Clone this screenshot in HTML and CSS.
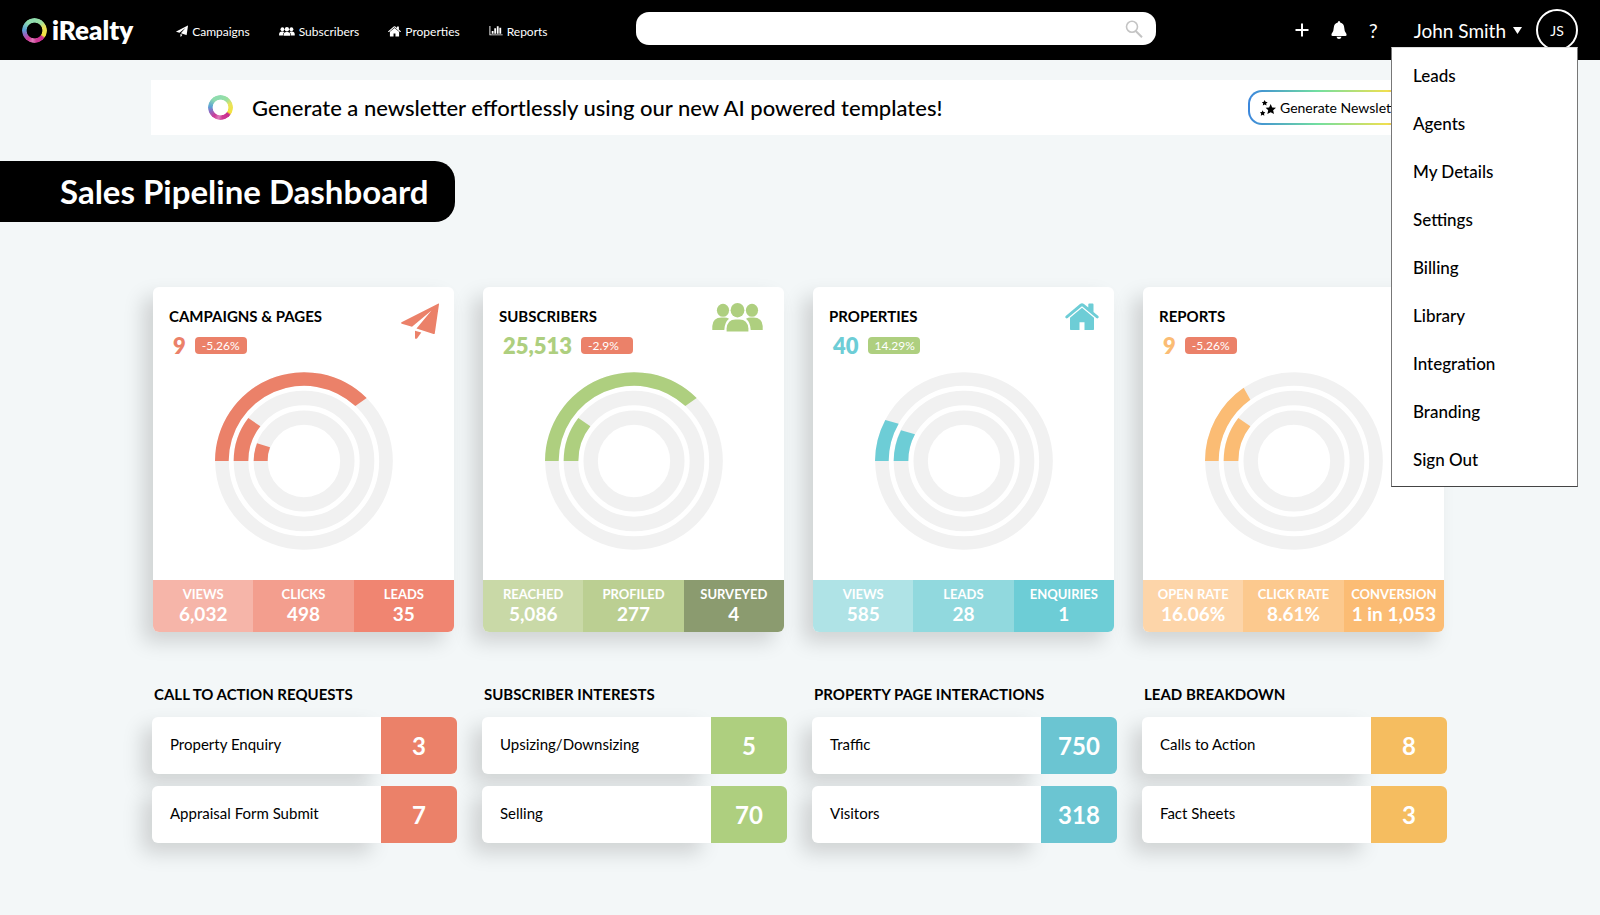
FILE: index.html
```html
<!DOCTYPE html>
<html lang="en">
<head>
    <meta charset="UTF-8">
    <meta name="viewport" content="width=device-width, initial-scale=1.0">
    <title>iRealty - Sales Pipeline Dashboard</title>
    <link rel="stylesheet" href="styles.css">
</head>
<body>
    <!-- Shared icons and chart rings -->
    <svg class="sprite" aria-hidden="true">
        <symbol id="icon-plane" viewBox="0 0 38 36">
            <path d="M37.500 0.600 L0.500 19.300 Q-0.300 20 0.800 20.700 L11 23.800 L30.500 7.500 L15.500 25.500 L32.500 31 Q33.600 31.300 33.800 30.200 L38 1.200 Q38.100 0.300 37.500 0.600Z"/>
            <path d="M14 27.700 L20.300 29.500 L16.200 35.200 Q14.200 36.800 14 34.800Z"/>
        </symbol>
        <symbol id="icon-people" viewBox="0 0 51 29" preserveAspectRatio="xMinYMid">
            <ellipse cx="11" cy="7.300" rx="6.100" ry="6.500"/>
            <ellipse cx="40" cy="7.300" rx="6.100" ry="6.500"/>
            <ellipse cx="25.500" cy="7.200" rx="6.900" ry="7.200"/>
            <path d="M0.300 27 V23 Q0.800 14.500 9.500 14.500 H12.500 Q15 14.500 17 15.800 Q12.500 19.500 12.300 27Z"/>
            <path d="M50.700 27 V23 Q50.200 14.500 41.500 14.500 H38.500 Q36 14.500 34 15.800 Q38.500 19.500 38.700 27Z"/>
            <path d="M14.600 28.500 V25.500 Q15.400 16.500 23.500 16.500 H27.500 Q35.600 16.500 36.400 25.500 V28.500Z"/>
        </symbol>
        <symbol id="icon-house" viewBox="0 0 34 28">
            <path d="M17 0.200 Q18 0.200 19 1 L23.300 4.600 V1.500 Q23.300 0.600 24.200 0.600 H27.600 Q28.500 0.600 28.500 1.500 V9 L33.300 13.100 Q34.100 14 33.300 15 Q32.300 15.800 31.300 15 L17 3.200 L2.700 15 Q1.700 15.800 0.700 15 Q-0.100 14 0.700 13.100 L15 1 Q16 0.200 17 0.200Z"/>
            <path d="M17 4.800 L29 14.700 V26.200 Q29 27 28.200 27 H19.500 V19.200 H14.500 V27 H5.800 Q5 27 5 26.200 V14.700Z"/>
        </symbol>
        <symbol id="icon-chart" viewBox="0 0 15 11">
            <path d="M0.300 0 H1.300 V9.300 H14.800 V10.300 H0.300Z"/>
            <path d="M2.800 5.500 h2 v3 h-2Z M5.600 2.500 h2 v6 h-2Z M8.400 0.300 h2 v8.200 h-2Z M11.200 1.800 h2 v6.700 h-2Z"/>
        </symbol>
        <symbol id="icon-stars" viewBox="0 0 24 24">
            <path d="M16 6 L18.300 11.200 L24 11.800 L19.700 15.500 L21 21 L16 18.200 L11 21 L12.300 15.500 L8.500 11.800 L13.700 11.200Z"/>
            <path d="M7 0 L8.300 2.800 L11.500 3.200 L9.200 5.300 L9.800 8.300 L7 6.800 L4.200 8.300 L4.800 5.300 L2.800 3.200 L5.700 2.800Z"/>
            <path d="M4 15.500 L5.200 18 L8 18.500 L6 20.500 L6.500 23.500 L4 22 L1.200 23.500 L1.800 20.500 L0 18.500 L2.800 18Z"/>
        </symbol>
        <symbol id="rings" viewBox="-267 -267 534 534">
            <circle r="246" fill="none" stroke="#f1f1f1" stroke-width="41"/>
            <circle r="189" fill="none" stroke="#f1f1f1" stroke-width="44"/>
            <circle r="130" fill="none" stroke="#f1f1f1" stroke-width="43"/>
        </symbol>
    </svg>

    <header class="header">
        <div class="header-left">
            <a href="#" class="logo"><span class="ring"></span>iRealty</a>
            <nav class="main-nav" aria-label="Main">
                <a href="#"><svg width="12" height="12"><use href="#icon-plane"/></svg>Campaigns</a>
                <a href="#"><svg width="16" height="9"><use href="#icon-people"/></svg>Subscribers</a>
                <a href="#"><svg width="13" height="11"><use href="#icon-house"/></svg>Properties</a>
                <a href="#"><svg width="14" height="10"><use href="#icon-chart"/></svg>Reports</a>
            </nav>
        </div>
        <form class="search" action="#" role="search">
            <input type="search" id="search" aria-label="Search">
            <button type="submit" aria-label="Submit search">
                <svg width="18" height="18" viewBox="0 0 18 18" fill="none" stroke="#c4c4c4" stroke-width="1.600"><circle cx="7" cy="6.800" r="5.500"/><path d="M10.700 11 L17 17.300" stroke-width="2"/></svg>
            </button>
        </form>
        <div class="header-right">
            <button type="button" class="icon-button" aria-label="Add">
                <svg width="14" height="14" viewBox="0 0 14 14" stroke="#fff" stroke-width="2"><path d="M7 0.500 V13.500 M0.500 7 H13.500"/></svg>
            </button>
            <button type="button" class="icon-button" aria-label="Notifications">
                <svg width="16" height="18" viewBox="0 0 16 18" fill="#fff"><path d="M8 0 Q9.200 0 9.200 1.500 Q13 2.500 13.200 6.500 Q13.300 11 15.500 13 Q16 14.800 14.500 15 H1.500 Q0 14.800 0.500 13 Q2.700 11 2.800 6.500 Q3 2.500 6.800 1.500 Q6.800 0 8 0Z M5.500 15.800 H10.500 Q10 18 8 18 Q6 18 5.500 15.800Z"/></svg>
            </button>
            <button type="button" class="icon-button help">?</button>
            <button type="button" class="user" aria-expanded="true">John Smith<svg width="9" height="7" viewBox="0 0 9 7" fill="#fff"><path d="M0 0 H9 L4.500 7Z"/></svg></button>
            <span class="avatar">JS</span>
        </div>
        <nav class="user-menu" aria-label="Account">
            <a href="#">Leads</a>
            <a href="#">Agents</a>
            <a href="#">My Details</a>
            <a href="#">Settings</a>
            <a href="#">Billing</a>
            <a href="#">Library</a>
            <a href="#">Integration</a>
            <a href="#">Branding</a>
            <a href="#">Sign Out</a>
        </nav>
    </header>

    <section class="banner">
        <span class="ring"></span>
        <p>Generate a newsletter effortlessly using our new AI powered templates!</p>
        <button type="button" class="generate"><svg width="16" height="16"><use href="#icon-stars"/></svg>Generate Newsletter</button>
    </section>

    <h1 class="page-title">Sales Pipeline Dashboard</h1>

    <main class="dashboard">
        <section class="cards">
            <article class="card red">
                <div class="card-head">
                    <h2>CAMPAIGNS &amp; PAGES</h2>
                    <svg class="card-icon" width="38" height="36"><use href="#icon-plane"/></svg>
                    <div class="total"><strong>9</strong><span class="badge down">-5.26%</span></div>
                </div>
                <svg class="chart" viewBox="-267 -267 534 534">
                    <use href="#rings" x="-267" y="-267" width="534" height="534"/>
                    <path d="M-267 0 A267 267 0 0 1 188 -189 L154 -165 A226 226 0 0 0 -226 0Z"/>
                    <path d="M-211 0 A211 211 0 0 1 -167 -129 L-131 -104 A167 167 0 0 0 -167 0Z"/>
                    <path d="M-151 0 A151 151 0 0 1 -141 -53 L-102 -41 A109 109 0 0 0 -109 0Z"/>
                </svg>
                <dl class="stats">
                    <div><dt>VIEWS</dt><dd>6,032</dd></div>
                    <div><dt>CLICKS</dt><dd>498</dd></div>
                    <div><dt>LEADS</dt><dd>35</dd></div>
                </dl>
            </article>

            <article class="card green">
                <div class="card-head">
                    <h2>SUBSCRIBERS</h2>
                    <svg class="card-icon" width="57" height="29"><use href="#icon-people"/></svg>
                    <div class="total"><strong>25,513</strong><span class="badge down">-2.9%</span></div>
                </div>
                <svg class="chart" viewBox="-267 -267 534 534">
                    <use href="#rings" x="-267" y="-267" width="534" height="534"/>
                    <path d="M-267 0 A267 267 0 0 1 188 -189 L154 -165 A226 226 0 0 0 -226 0Z"/>
                    <path d="M-211 0 A211 211 0 0 1 -167 -129 L-131 -104 A167 167 0 0 0 -167 0Z"/>
                </svg>
                <dl class="stats">
                    <div><dt>REACHED</dt><dd>5,086</dd></div>
                    <div><dt>PROFILED</dt><dd>277</dd></div>
                    <div><dt>SURVEYED</dt><dd>4</dd></div>
                </dl>
            </article>

            <article class="card blue">
                <div class="card-head">
                    <h2>PROPERTIES</h2>
                    <svg class="card-icon" width="34" height="28"><use href="#icon-house"/></svg>
                    <div class="total"><strong>40</strong><span class="badge up">14.29%</span></div>
                </div>
                <svg class="chart" viewBox="-267 -267 534 534">
                    <use href="#rings" x="-267" y="-267" width="534" height="534"/>
                    <path d="M-267 0 A267 267 0 0 1 -236 -123 L-196 -112 A226 226 0 0 0 -226 0Z"/>
                    <path d="M-211 0 A211 211 0 0 1 -189 -92 L-147 -80 A167 167 0 0 0 -167 0Z"/>
                </svg>
                <dl class="stats">
                    <div><dt>VIEWS</dt><dd>585</dd></div>
                    <div><dt>LEADS</dt><dd>28</dd></div>
                    <div><dt>ENQUIRIES</dt><dd>1</dd></div>
                </dl>
            </article>

            <article class="card orange">
                <div class="card-head">
                    <h2>REPORTS</h2>
                    <svg class="card-icon" width="38" height="28"><use href="#icon-chart"/></svg>
                    <div class="total"><strong>9</strong><span class="badge down">-5.26%</span></div>
                </div>
                <svg class="chart" viewBox="-267 -267 534 534">
                    <use href="#rings" x="-267" y="-267" width="534" height="534"/>
                    <path d="M-267 0 A267 267 0 0 1 -151 -220 L-131 -184 A226 226 0 0 0 -226 0Z"/>
                    <path d="M-211 0 A211 211 0 0 1 -167 -129 L-131 -104 A167 167 0 0 0 -167 0Z"/>
                </svg>
                <dl class="stats">
                    <div><dt>OPEN RATE</dt><dd>16.06%</dd></div>
                    <div><dt>CLICK RATE</dt><dd>8.61%</dd></div>
                    <div><dt>CONVERSION</dt><dd>1 in 1,053</dd></div>
                </dl>
            </article>
        </section>

        <section class="lists">
            <div class="list red">
                <h2>CALL TO ACTION REQUESTS</h2>
                <div class="row"><span>Property Enquiry</span><strong>3</strong></div>
                <div class="row"><span>Appraisal Form Submit</span><strong>7</strong></div>
            </div>
            <div class="list green">
                <h2>SUBSCRIBER INTERESTS</h2>
                <div class="row"><span>Upsizing/Downsizing</span><strong>5</strong></div>
                <div class="row"><span>Selling</span><strong>70</strong></div>
            </div>
            <div class="list blue">
                <h2>PROPERTY PAGE INTERACTIONS</h2>
                <div class="row"><span>Traffic</span><strong>750</strong></div>
                <div class="row"><span>Visitors</span><strong>318</strong></div>
            </div>
            <div class="list orange">
                <h2>LEAD BREAKDOWN</h2>
                <div class="row"><span>Calls to Action</span><strong>8</strong></div>
                <div class="row"><span>Fact Sheets</span><strong>3</strong></div>
            </div>
        </section>
    </main>
</body>
</html>
```

FILE: styles.css
```css
* {
    box-sizing: border-box;
}
body {
    margin: 0;
    background-color: #f3f7f8;
    color: #000;
    font-family: Lato, sans-serif;
}
h1, h2, p, dl, dd {
    margin: 0;
}
a {
    color: inherit;
    text-decoration: none;
}
button {
    padding: 0;
    border: none;
    background: none;
    color: inherit;
    font-family: inherit;
    cursor: pointer;
}
.sprite {
    display: none;
}

/* Header */
.header {
    position: relative;
    display: grid;
    grid-template-columns: 614px minmax(200px, 520px) 1fr;
    height: 60px;
    padding: 0 22px;
    background-color: #000;
    color: #fff;
}
.header-left,
.header-right,
.main-nav,
.main-nav a,
.logo,
.user {
    display: flex;
    align-items: center;
}
.header-left {
    gap: 43px;
}
.logo {
    gap: 5px;
    font-size: 26px;
    font-weight: 800;
}
.ring {
    flex: none;
    width: 25px;
    height: 25px;
    border-radius: 50%;
    background: conic-gradient(#8fdcae 0deg, #9be0a0 40deg, #e8e35c 70deg, #f4e23c 120deg, #c92f8e 130deg, #cf3a96 170deg, #dd7dba 190deg, #cf3a96 215deg, #8c6cc4 250deg, #5aa2d6 275deg, #8fdcae 320deg);
    -webkit-mask: radial-gradient(closest-side, transparent 60%, #000 66%);
    mask: radial-gradient(closest-side, transparent 60%, #000 66%);
}
.main-nav {
    gap: 29px;
    padding-top: 2px;
    font-size: 12px;
}
.main-nav a {
    gap: 4px;
}
.main-nav svg {
    fill: #fff;
}
.search {
    display: flex;
    align-items: center;
    height: 33px;
    margin-top: 12px;
    padding: 0 13px 0 14px;
    border-radius: 13px;
    background-color: #fff;
}
.search input {
    flex: 1;
    min-width: 0;
    border: none;
    outline: none;
    background: none;
    font: inherit;
}
.search button,
.icon-button {
    display: flex;
}
.header-right {
    justify-content: flex-end;
}
.icon-button {
    margin-right: 22px;
}
.help {
    margin-right: 36px;
    font-size: 20px;
}
.user {
    gap: 7px;
    margin-right: 14px;
    font-size: 19px;
}
.avatar {
    display: flex;
    align-items: center;
    justify-content: center;
    width: 42px;
    height: 42px;
    border: 2px solid #fff;
    border-radius: 50%;
    font-size: 14px;
}
.user-menu {
    position: absolute;
    top: 47px;
    right: 22px;
    z-index: 2;
    width: 187px;
    padding: 4px 0 2px;
    border: 1px solid #777;
    border-top-color: #ddd;
    border-bottom-color: #444;
    background-color: #fff;
    color: #000;
}
.user-menu a {
    display: block;
    padding: 0 21px;
    font-size: 17px;
    font-weight: 500;
    line-height: 48px;
}

/* Newsletter banner */
.banner {
    display: flex;
    align-items: center;
    height: 55px;
    margin: 20px 152px 0 151px;
    padding: 0 26px 0 57px;
    background-color: #fff;
}
.banner p {
    flex: 1;
    margin-left: 19px;
    font-size: 22px;
    font-weight: 500;
}
.generate {
    display: flex;
    align-items: center;
    gap: 4px;
    height: 35px;
    padding: 0 12px 0 10px;
    border: 2px solid transparent;
    border-radius: 14px;
    background: linear-gradient(#fff, #fff) padding-box, linear-gradient(90deg, #3a86dc, #72dfa0 40%, #f0e050 80%, #cf3a96) border-box;
    font-size: 14px;
}

.page-title {
    width: fit-content;
    margin-top: 26px;
    padding: 0 26px 0 60px;
    border-radius: 0 20px 20px 0;
    background-color: #000;
    color: #fff;
    font-size: 33px;
    font-weight: 700;
    line-height: 61px;
}

/* Dashboard */
.dashboard {
    padding: 65px 153px 72px 152px;
}
.cards,
.lists {
    display: grid;
    grid-template-columns: repeat(4, 1fr);
    gap: 25px;
}
.red {
    --main: #eb8169;
    --value: #eb8169;
    --stat-1: #f6b5a9;
    --stat-2: #f39e8e;
    --stat-3: #f08571;
}
.green {
    --main: #aecf7f;
    --value: #aecf7f;
    --stat-1: #c9d9a7;
    --stat-2: #bbcf92;
    --stat-3: #8b9b6f;
}
.blue {
    --main: #6dcdd6;
    --value: #6bc5d2;
    --stat-1: #afe3e6;
    --stat-2: #91d9de;
    --stat-3: #6dcdd6;
}
.orange {
    --main: #fbbc74;
    --value: #f5bd60;
    --stat-1: #fdd5a9;
    --stat-2: #fcc98e;
    --stat-3: #fbbc74;
}
.card {
    margin: 0 3px 0 1px;
    border-radius: 6px;
    background-color: #fff;
    box-shadow: -10px 10px 20px rgba(0, 0, 0, 0.15);
}
.card-head {
    display: grid;
    grid-template-columns: 1fr auto;
    grid-template-rows: 24px 36px;
    height: 85px;
    padding: 16px 15px 0 16px;
}
.card-head h2,
.list h2 {
    font-size: 15px;
    font-weight: 700;
    line-height: 20px;
}
.card-head h2 {
    margin-top: 3px;
}
.card-icon {
    grid-row: span 2;
    fill: var(--main);
}
.total {
    display: flex;
    align-items: center;
    gap: 9px;
    padding-left: 4px;
}
.total strong {
    color: var(--main);
    font-size: 22px;
    font-weight: 800;
}
.badge {
    width: 52px;
    padding-left: 7px;
    border-radius: 4px;
    color: #fff;
    font-size: 12px;
    line-height: 17px;
}
.down {
    background-color: #eb8169;
}
.up {
    background-color: #aecf7f;
}
.chart {
    display: block;
    width: 178px;
    height: 178px;
    margin: 0 auto 30px;
    fill: var(--main);
}
.stats {
    display: grid;
    grid-template-columns: repeat(3, 1fr);
    overflow: hidden;
    border-radius: 0 0 6px 6px;
    color: #fff;
    font-weight: 700;
    text-align: center;
}
.stats div {
    height: 52px;
    padding-top: 5px;
    background-color: var(--stat-1);
}
.stats div:nth-child(2) {
    background-color: var(--stat-2);
}
.stats div:nth-child(3) {
    background-color: var(--stat-3);
}
.stats dt {
    font-size: 13px;
    line-height: 18px;
}
.stats dd {
    font-size: 19px;
    line-height: 21px;
}

/* Lists under the cards */
.lists {
    margin-top: 52px;
}
.list h2 {
    margin: 0 0 13px 2px;
}
.row {
    display: flex;
    height: 57px;
    margin-bottom: 12px;
}
.row span {
    flex: 1;
    padding-left: 18px;
    border-radius: 6px 0 0 6px;
    background-color: #fff;
    box-shadow: -10px 10px 20px rgba(0, 0, 0, 0.15);
    font-size: 15px;
    line-height: 54px;
}
.row strong {
    z-index: 1;
    width: 76px;
    border-radius: 0 6px 6px 0;
    background-color: var(--value);
    color: #fff;
    font-size: 24px;
    font-weight: 700;
    line-height: 57px;
    text-align: center;
}
```
